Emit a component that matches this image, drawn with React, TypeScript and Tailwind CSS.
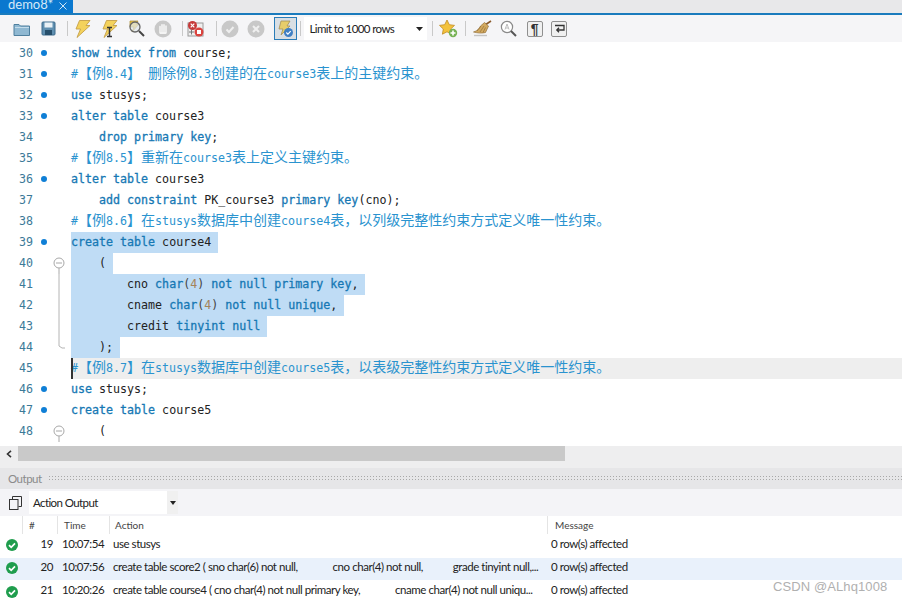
import type { ReactNode } from "react"

type Seg = { t: string; c?: "k" | "n" | "s" }
type Line = {
  no: number
  dot?: boolean
  fold?: "open" | "line" | "end"
  comment?: string
  segs?: Seg[]
  selected?: boolean
  current?: boolean
}

const k = (t: string): Seg => ({ t, c: "k" })
const p = (t: string): Seg => ({ t })
const n = (t: string): Seg => ({ t, c: "n" })
const s = (t: string): Seg => ({ t, c: "s" })

const lines: Line[] = [
  { no: 30, dot: true, segs: [k("show index from"), p(" course;")] },
  { no: 31, dot: true, comment: "#【例8.4】 删除例8.3创建的在course3表上的主键约束。" },
  { no: 32, dot: true, segs: [k("use"), p(" stusys;")] },
  { no: 33, dot: true, segs: [k("alter table"), p(" course3")] },
  { no: 34, segs: [p("    "), k("drop primary key"), p(";")] },
  { no: 35, comment: "#【例8.5】重新在course3表上定义主键约束。" },
  { no: 36, dot: true, segs: [k("alter table"), p(" course3")] },
  { no: 37, segs: [p("    "), k("add constraint"), p(" PK_course3 "), k("primary key"), p("(cno);")] },
  { no: 38, comment: "#【例8.6】在stusys数据库中创建course4表，以列级完整性约束方式定义唯一性约束。" },
  { no: 39, dot: true, selected: true, segs: [k("create table"), p(" course4 ")] },
  { no: 40, fold: "open", selected: true, segs: [p("    ( ")] },
  { no: 41, fold: "line", selected: true, segs: [p("        cno "), k("char"), s("("), n("4"), s(")"), p(" "), k("not null primary key"), p(", ")] },
  { no: 42, fold: "line", selected: true, segs: [p("        cname "), k("char"), s("("), n("4"), s(")"), p(" "), k("not null unique"), p(", ")] },
  { no: 43, fold: "line", selected: true, segs: [p("        credit "), k("tinyint null"), p(" ")] },
  { no: 44, fold: "end", selected: true, segs: [p("    ); ")] },
  { no: 45, current: true, comment: "#【例8.7】在stusys数据库中创建course5表，以表级完整性约束方式定义唯一性约束。" },
  { no: 46, dot: true, segs: [k("use"), p(" stusys;")] },
  { no: 47, dot: true, segs: [k("create table"), p(" course5")] },
  { no: 48, fold: "open", segs: [p("    (")] },
]

const segColor = {
  k: "text-[#1678b4] [-webkit-text-stroke:0.3px_#1678b4]",
  n: "text-[#a5835a]",
  s: "text-[#444]",
}

// CJK glyphs are wider than the latin cells in the editor font
function Comment({ text }: { text: string }) {
  const parts = text.match(/[\u3000-\u9fff\uff00-\uffef]+|[^\u3000-\u9fff\uff00-\uffef]+/g) ?? []
  return (
    <span className="text-[#2a93cf]">
      {parts.map((part, i) =>
        /[\u3000-\u9fff\uff00-\uffef]/.test(part) ? (
          <span key={i} className="align-[0.5px] font-['Noto_Sans_CJK_SC',sans-serif] text-[14px] leading-[1px]">
            {part}
          </span>
        ) : (
          <span key={i}>{part}</span>
        ),
      )}
    </span>
  )
}

function FoldMark({ kind }: { kind: Line["fold"] }) {
  return (
    <svg width="15" height="21" viewBox="0 0 15 21" className="block">
      {kind === "open" && (
        <g fill="none" stroke="#a8a8a8">
          <circle cx="8" cy="10" r="5" fill="#fff" />
          <path d="M5 10h6M8 15v6" />
        </g>
      )}
      {kind === "line" && <path d="M8 0v21" stroke="#b4b4b4" fill="none" />}
      {kind === "end" && <path d="M8 0v9l3 2h3" stroke="#b4b4b4" fill="none" />}
    </svg>
  )
}

function CodeRow({ line }: { line: Line }) {
  return (
    <div className="flex h-[21px] items-center">
      <div className="w-[33px] text-right text-[#3c7a98]">{line.no}</div>
      <div className="flex w-[18px] justify-end pr-[4px]">
        {line.dot && <div className="mb-[2px] size-[6px] rounded-full bg-[#0f7fd6]" />}
      </div>
      <div className="w-[19px]">{line.fold && <FoldMark kind={line.fold} />}</div>
      <div
        className={
          line.current
            ? "relative ml-px flex h-[21px] flex-1 items-center bg-[#eeeeee]"
            : "flex h-[21px] flex-1 items-center pl-px"
        }
      >
        {line.current && <div className="absolute left-0 top-0 h-[21px] w-[2px] bg-[#333]" />}
        <div
          className={
            line.selected
              ? "h-[21px] whitespace-pre bg-[#bfdcf5] leading-[21px] text-[#222]"
              : "h-[21px] whitespace-pre leading-[21px] text-[#222]"
          }
        >
          {line.comment ? (
            <Comment text={line.comment} />
          ) : (
            line.segs?.map((seg, i) => (
              <span key={i} className={seg.c ? segColor[seg.c] : ""}>
                {seg.t}
              </span>
            ))
          )}
        </div>
      </div>
    </div>
  )
}

function Tool({ children, w = 26.5 }: { children: ReactNode; w?: number }) {
  return (
    <div className="flex h-[27px] shrink-0 items-center justify-center" style={{ width: w }}>
      {children}
    </div>
  )
}

function Sep({ ml, mr }: { ml: string; mr: string }) {
  return <div className={`h-[15px] w-px bg-[#c9c9c9] ${ml} ${mr}`} />
}

const Bolt = () => (
  <path d="M6.5 1h10.5l-4 5h4L4 18l3.5-8.5H3z" fill="#f4d25c" stroke="#c49f4a" strokeWidth=".9" strokeLinejoin="round" />
)

function Icons() {
  return (
    <>
      <Tool>
        <svg width="18" height="16" viewBox="0 0 18 16">
          <path d="M1 3.5h5l1.5 1.5H16.5v9.5H1z" fill="#8fb8d2" stroke="#4f7f9e" />
          <path d="M2 6.5h14" stroke="#c4dceb" />
        </svg>
      </Tool>
      <Tool>
        <svg width="15" height="15" viewBox="0 0 15 15">
          <rect x="1" y="1" width="13" height="13" rx="1" fill="#5f8fb0" stroke="#3d6b8c" />
          <rect x="3.5" y="1.5" width="8" height="5" fill="#e9f1f6" />
          <rect x="4" y="9" width="7" height="5" fill="#264f6b" />
        </svg>
      </Tool>
      <Sep ml="ml-[5px]" mr="mr-[2px]" />
      <Tool>
        <svg width="20" height="20" viewBox="0 0 20 19">
          <Bolt />
        </svg>
      </Tool>
      <Tool>
        <svg width="20" height="20" viewBox="0 0 20 19">
          <Bolt />
          <path d="M7 8h5M7 17h5M9.5 8v9" stroke="#333" strokeWidth="1.5" fill="none" />
        </svg>
      </Tool>
      <Tool>
        <svg width="20" height="20" viewBox="0 0 20 20">
          <path d="M4 2h8l-2 3h3L6 13l2-5H4z" fill="#e7c64f" stroke="#a98a2a" strokeWidth=".7" />
          <circle cx="9" cy="8" r="5" fill="#dfe7ea" fillOpacity=".7" stroke="#666" strokeWidth="1.3" />
          <path d="M13 12l5 5" stroke="#444" strokeWidth="2" />
        </svg>
      </Tool>
      <Tool>
        <svg width="18" height="18" viewBox="0 0 18 18">
          <circle cx="9" cy="9" r="8.5" fill="#c8c8c8" />
          <path d="M6 13V6.5M8 13V4.8M10 13V4.8M12 13V6" stroke="#f4f4f4" strokeWidth="1.6" strokeLinecap="round" />
          <path d="M6 13h6" stroke="#f4f4f4" strokeWidth="2" />
        </svg>
      </Tool>
      <Sep ml="ml-[6px]" mr="mr-0" />
      <Tool>
        <svg width="18" height="18" viewBox="0 0 18 18">
          <rect x="1" y="3" width="15" height="13" fill="#efefef" stroke="#9a9a9a" />
          <circle cx="5.5" cy="5.5" r="4.5" fill="#c63a3a" />
          <path d="M3.7 3.7l3.6 3.6M7.3 3.7l-3.6 3.6" stroke="#fff" strokeWidth="1.2" />
          <circle cx="12" cy="12" r="4.5" fill="#d9433f" />
          <rect x="10" y="10" width="4" height="4" fill="#fff" />
          <path d="M2 12h5M4.5 9.5v5" stroke="#777" />
        </svg>
      </Tool>
      <Sep ml="ml-[6px]" mr="mr-0" />
      <Tool>
        <svg width="18" height="18" viewBox="0 0 18 18">
          <circle cx="9" cy="9" r="8.5" fill="#c8c8c8" />
          <path d="M5.5 9.5l2.5 2.5 4.5-5" stroke="#efefef" strokeWidth="2" fill="none" />
        </svg>
      </Tool>
      <Tool>
        <svg width="18" height="18" viewBox="0 0 18 18">
          <circle cx="9" cy="9" r="8.5" fill="#c8c8c8" />
          <path d="M6 6l6 6M12 6l-6 6" stroke="#efefef" strokeWidth="2" />
        </svg>
      </Tool>
      <div className="ml-[4px] flex size-[23px] items-center justify-center border border-[#2a7cb8] bg-[#d9dfe4]">
        <svg width="18" height="18" viewBox="0 0 18 18">
          <path d="M5 1h9l-3 5h3L5 15l2-6H3z" fill="#e7cd6a" stroke="#a3915a" strokeWidth=".8" />
          <circle cx="12.5" cy="12.5" r="4.5" fill="#3f7fc4" />
          <path d="M10.3 12.5l1.6 1.6 2.8-3" stroke="#fff" strokeWidth="1.2" fill="none" />
        </svg>
      </div>
      <Sep ml="ml-[3px]" mr="mr-[3px]" />
      <div className="relative flex h-[23px] w-[123px] items-center bg-white pl-[6px] text-[#222]">
        <span className="text-[11.5px] tracking-[-0.6px]">Limit to 1000 rows</span>
        <svg width="7" height="4" viewBox="0 0 7 4" className="absolute right-[4px] top-[10px]">
          <path d="M0 0h7L3.5 4z" fill="#222" />
        </svg>
      </div>
      <Sep ml="ml-[5px]" mr="mr-[5px]" />
      <Tool w={22}>
        <svg width="19" height="19" viewBox="0 0 19 19">
          <path d="M8 1l2.3 4.7 5.2.7-3.8 3.6.9 5.2L8 12.8l-4.6 2.4.9-5.2L.5 6.4l5.2-.7z" fill="#f3c23c" stroke="#c08a1f" strokeWidth=".8" />
          <circle cx="14" cy="14" r="4.2" fill="#77b255" />
          <path d="M14 11.5v5M11.5 14h5" stroke="#fff" strokeWidth="1.6" />
        </svg>
      </Tool>
      <Sep ml="ml-[5px]" mr="mr-[3px]" />
      <Tool>
        <svg width="20" height="18" viewBox="0 0 20 18">
          <path d="M19 1l-6 4" stroke="#8a5a2b" strokeWidth="1.6" />
          <path d="M12.5 2.5l4 3.5-3 6.5c-4 1-8 .5-12-.5 4-1 6-3.5 7-6z" fill="#d2a95f" stroke="#93703a" strokeWidth=".7" />
          <path d="M5 11l4-5M8 12l4-6M11 12.5l2.5-5" stroke="#93703a" strokeWidth=".7" />
          <path d="M2 15.5h13" stroke="#c4c4c4" strokeWidth="1.4" />
        </svg>
      </Tool>
      <Tool>
        <svg width="17" height="17" viewBox="0 0 17 17">
          <circle cx="7" cy="7" r="5.6" fill="#fff" stroke="#8a8a8a" strokeWidth="1.2" />
          <path d="M5 9.5L7 4l2 5.5M5.8 8h2.4" stroke="#b5b5b5" fill="none" strokeWidth=".9" />
          <path d="M11 11l5 5" stroke="#555" strokeWidth="2" />
        </svg>
      </Tool>
      <Tool>
        <div className="flex h-[16px] w-[16px] items-center justify-center rounded-[2px] border border-[#8f8f8f] bg-[#f0f0f0] font-['Liberation_Sans',sans-serif] text-[14px] font-bold leading-none text-[#333]">
          ¶
        </div>
      </Tool>
      <Tool w={22}>
        <div className="flex h-[16px] w-[16px] items-center justify-center rounded-[2px] border border-[#8f8f8f] bg-[#f0f0f0]">
          <svg width="11" height="9" viewBox="0 0 11 9">
            <path d="M1 1.5h9V6H3M5 3.7L2.8 6 5 8.3" stroke="#333" strokeWidth="1.3" fill="none" />
          </svg>
        </div>
      </Tool>
    </>
  )
}

const OkIcon = () => (
  <svg width="12" height="12" viewBox="0 0 12 12" className="block">
    <circle cx="6" cy="6" r="6" fill="#1f9d4d" />
    <path d="M3 6.2l2.2 2.2L9 4.4" stroke="#fff" strokeWidth="1.7" fill="none" />
  </svg>
)

const rows = [
  { no: 19, time: "10:07:54", action: "use stusys", h: "h-[24px]", bg: "", text: "pb-[4px]", icon: "pb-[2px]" },
  {
    no: 20,
    time: "10:07:56",
    action: "create table score2 ( sno char(6) not null,              cno char(4) not null,            grade tinyint null,...",
    h: "h-[22px]",
    bg: "bg-[#e9f1fb]",
    text: "pb-[4px]",
    icon: "pb-[2px]",
  },
  {
    no: 21,
    time: "10:20:26",
    action: "create table course4 ( cno char(4) not null primary key,              cname char(4) not null uniqu...",
    h: "h-[23px]",
    bg: "",
    text: "pb-[3px]",
    icon: "",
  },
]

export default function App() {
  return (
    <div className="relative flex h-[604px] w-[902px] flex-col overflow-hidden bg-white font-['Lato',sans-serif] text-[12px] text-[#222]">
      <div className="flex h-[13px] shrink-0 bg-[#e8e8ea]">
        <div className="flex h-[13px] w-[73px] items-end justify-between overflow-hidden bg-[#0a78cf] pb-[2px] pl-[8px] pr-[6px] text-[13px] leading-[13px] text-[#d5e8f7]">
          <span>demo8*</span>
          <svg width="8" height="8" viewBox="0 0 8 8" className="mb-[1px] shrink-0">
            <path d="M.5.5l7 7M7.5.5l-7 7" stroke="#cfe4f5" fill="none" />
          </svg>
        </div>
      </div>
      <div className="h-[2px] shrink-0 bg-[#1a7bbd]" />
      <div className="flex h-[27px] shrink-0 items-center bg-[#f5f5f7] pl-[9px]">
        <Icons />
      </div>

      <div className="h-[404px] shrink-0 overflow-hidden bg-white pt-px font-['DejaVu_Sans_Mono',monospace] text-[11.65px]">
        {lines.map((line) => (
          <CodeRow key={line.no} line={line} />
        ))}
      </div>

      <div className="flex h-[15px] shrink-0 bg-[#eeeeef]">
        <div className="flex w-[18px] items-center justify-center">
          <svg width="6" height="8" viewBox="0 0 6 8">
            <path d="M5 .8L1.5 4 5 7.2" stroke="#333" strokeWidth="1.6" fill="none" />
          </svg>
        </div>
        <div className="w-[547px] bg-[#c9c9c9]" />
      </div>
      <div className="h-[7px] shrink-0 bg-[#eeeeef]" />

      <div className="flex h-[21px] shrink-0 items-center gap-[6px] bg-[#e6e6e8] pl-[8px] text-[#8a8a8a]">
        <span className="text-[11.5px] tracking-[-0.5px]">Output</span>
        <div className="h-[7px] flex-1 bg-[radial-gradient(#a8a8a8_0.6px,transparent_0.7px)] bg-[length:3px_3px]" />
      </div>

      <div className="flex h-[27px] shrink-0 items-center bg-[#f4f4f7] pl-[9px]">
        <svg width="13" height="14" viewBox="0 0 13 14" fill="none" stroke="#333">
          <rect x=".5" y="3.5" width="8.5" height="10" fill="#f4f4f7" />
          <path d="M3.5 3V.5h9v10H9.5" />
        </svg>
        <div className="ml-[7px] flex h-[23px] w-[149px] items-center justify-between bg-white pl-[4px]">
          <span className="text-[11.5px] tracking-[-0.6px]">Action Output</span>
          <div className="flex h-[23px] w-[11px] items-center justify-center bg-[#f0f0f0]">
            <svg width="6" height="4" viewBox="0 0 6 4">
              <path d="M0 0h6L3 4z" fill="#222" />
            </svg>
          </div>
        </div>
      </div>

      <div className="flex h-[18px] shrink-0 items-center text-[10px] text-[#444]">
        <div className="h-full w-[23px] border-r border-[#e4e4e4]" />
        <div className="h-full w-[35px] border-r border-[#e4e4e4] pl-[6px] leading-[18px]">#</div>
        <div className="h-full w-[52px] border-r border-[#e4e4e4] pl-[6px] leading-[18px]">Time</div>
        <div className="h-full w-[438px] border-r border-[#e4e4e4] pl-[5px] leading-[18px]">Action</div>
        <div className="pl-[7px]">Message</div>
      </div>

      {rows.map((row) => (
        <div key={row.no} className={`flex shrink-0 items-center whitespace-pre text-[11.5px] tracking-[-0.45px] ${row.h} ${row.bg}`}>
          <div className={`flex w-[23px] justify-center ${row.icon}`}><OkIcon /></div>
          <div className={`w-[30px] text-right ${row.text}`}>{row.no}</div>
          <div className={`w-[57px] pl-[9px] ${row.text}`}>{row.time}</div>
          <div className={`w-[438px] overflow-hidden pl-[3px] ${row.text}`}>{row.action}</div>
          <div className={`pl-[3px] ${row.text}`}>0 row(s) affected</div>
        </div>
      ))}

      <div className="absolute left-[773px] top-[577px] font-['Liberation_Sans',sans-serif] text-[13px] tracking-[0.1px] text-[#b0b0b0]">
        CSDN @ALhq1008
      </div>
    </div>
  )
}
